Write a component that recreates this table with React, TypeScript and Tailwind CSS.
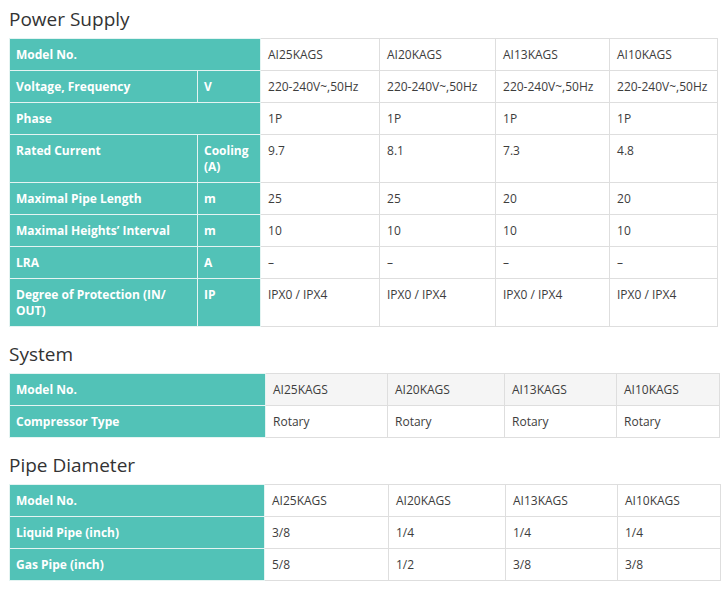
import React from "react";

type Row = {
  label: string;
  unit?: string;
  values: string[];
  shaded?: boolean;
};

const models = ["AI25KAGS", "AI20KAGS", "AI13KAGS", "AI10KAGS"];

const powerRows: Row[] = [
  { label: "Model No.", values: models },
  { label: "Voltage, Frequency", unit: "V", values: ["220-240V~,50Hz", "220-240V~,50Hz", "220-240V~,50Hz", "220-240V~,50Hz"] },
  { label: "Phase", values: ["1P", "1P", "1P", "1P"] },
  { label: "Rated Current", unit: "Cooling (A)", values: ["9.7", "8.1", "7.3", "4.8"] },
  { label: "Maximal Pipe Length", unit: "m", values: ["25", "25", "20", "20"] },
  { label: "Maximal Heights’ Interval", unit: "m", values: ["10", "10", "10", "10"] },
  { label: "LRA", unit: "A", values: ["–", "–", "–", "–"] },
  { label: "Degree of Protection (IN/ OUT)", unit: "IP", values: ["IPX0 / IPX4", "IPX0 / IPX4", "IPX0 / IPX4", "IPX0 / IPX4"] },
];

const systemRows: Row[] = [
  { label: "Model No.", values: models, shaded: true },
  { label: "Compressor Type", values: ["Rotary", "Rotary", "Rotary", "Rotary"] },
];

const pipeRows: Row[] = [
  { label: "Model No.", values: models },
  { label: "Liquid Pipe (inch)", values: ["3/8", "1/4", "1/4", "1/4"] },
  { label: "Gas Pipe (inch)", values: ["5/8", "1/2", "3/8", "3/8"] },
];

const th = "bg-[#52c2b7] text-white font-bold text-left align-top border border-[#e4f4f2] pl-[6px] pr-2 pt-[8px] pb-[7px]";
const td = "text-[#3d3d3d] align-top border border-[#dedede] pl-[7px] pr-1 pt-[8px] pb-[7px] whitespace-nowrap";

function SpecTable({ rows, cols, width, split }: { rows: Row[]; cols: number[]; width: string; split?: boolean }) {
  return (
    <table className={`table-fixed border-collapse text-[12px] leading-[16px] ${width}`}>
      <colgroup>
        {cols.map((w, i) => (
          <col key={i} style={{ width: w }} />
        ))}
      </colgroup>
      <tbody>
        {rows.map((row) => (
          <tr key={row.label}>
            {split ? (
              row.unit ? (
                <>
                  <th className={th}>{row.label}</th>
                  <th className={`${th} pl-2`}>{row.unit}</th>
                </>
              ) : (
                <th className={th} colSpan={2}>
                  {row.label}
                </th>
              )
            ) : (
              <th className={th}>{row.label}</th>
            )}
            {row.values.map((v, i) => (
              <td key={i} className={`${td} ${row.shaded ? "bg-[#f5f5f5]" : "bg-white"}`}>
                {v}
              </td>
            ))}
          </tr>
        ))}
      </tbody>
    </table>
  );
}

function Title({ children, className = "" }: { children: React.ReactNode; className?: string }) {
  return <h2 className={`text-[19px] leading-[26px] text-[#333] font-normal mb-[6px] ${className}`}>{children}</h2>;
}

export default function App() {
  return (
    <div className="bg-white min-h-screen pl-[9px] pt-[6px]" style={{ fontFamily: '"Open Sans", "Noto Sans", sans-serif' }}>
      <Title>Power Supply</Title>
      <SpecTable rows={powerRows} cols={[188, 63, 119, 116, 114, 108]} width="w-[708px]" split />

      <Title className="mt-[14px]">System</Title>
      <SpecTable rows={systemRows} cols={[256, 122, 117, 112, 103]} width="w-[710px]" />

      <Title className="mt-[14px]">Pipe Diameter</Title>
      <SpecTable rows={pipeRows} cols={[255, 124, 117, 112, 103]} width="w-[711px]" />
    </div>
  );
}
